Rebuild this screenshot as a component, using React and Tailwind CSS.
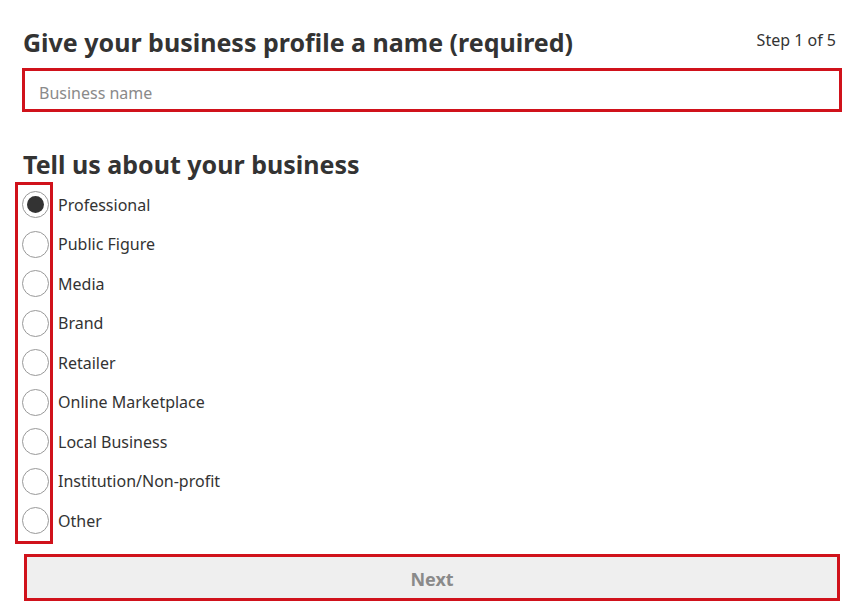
import React from "react";

const options = [
  "Professional",
  "Public Figure",
  "Media",
  "Brand",
  "Retailer",
  "Online Marketplace",
  "Local Business",
  "Institution/Non-profit",
  "Other",
];

const App = () => {
  const selected = "Professional";

  return (
    <div className="w-[855px] h-[601px] overflow-hidden bg-white text-[#333] font-['Noto_Sans',sans-serif]">
      <div className="flex items-start justify-between pl-[23px] pr-[19px] pt-[26px]">
        <h1 className="text-[25px] font-bold leading-[32px]">
          Give your business profile a name (required)
        </h1>
        <span className="text-[16px] leading-[24px] pt-[2px]">Step 1 of 5</span>
      </div>

      <div className="ml-[22px] mt-[10px] w-[820px] h-[44px] border-[3px] border-[#d0121b] flex items-center">
        <input
          className="w-full h-full px-[14px] pt-[5px] text-[16px] outline-none placeholder:text-[#8a8a8a]"
          placeholder="Business name"
        />
      </div>

      <h2 className="ml-[23px] mt-[36px] text-[25px] font-bold leading-[32px]">
        Tell us about your business
      </h2>

      <div className="flex mt-[2px]">
        <div className="ml-[15px] w-[38px] border-[3px] border-[#d0121b] flex flex-col pl-[4px]">
          {options.map((o) => (
            <div key={o} className="h-[39.5px] flex items-center">
              <span className="w-[27px] h-[27px] rounded-full border border-[#999] flex items-center justify-center">
                {o === selected && <span className="w-[17px] h-[17px] rounded-full bg-[#333]" />}
              </span>
            </div>
          ))}
        </div>
        <div className="flex flex-col pl-[5px] pt-[3px]">
          {options.map((o) => (
            <label key={o} className="h-[39.5px] flex items-center text-[16px]">
              {o}
            </label>
          ))}
        </div>
      </div>

      <button className="ml-[24px] mt-[10px] w-[816px] h-[47px] pt-[5px] bg-[#efefef] border-[3px] border-[#d0121b] text-[18px] font-bold text-[#8a8a8a] flex items-center justify-center">
        Next
      </button>
    </div>
  );
};

export default App;
